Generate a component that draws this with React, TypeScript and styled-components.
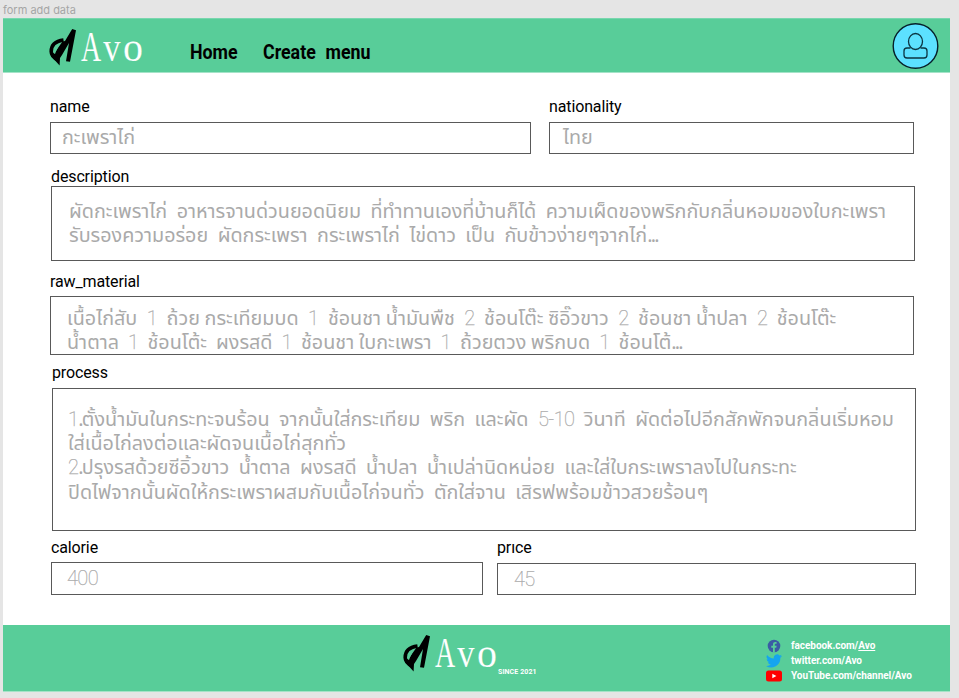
import React from "react";
import styled, { createGlobalStyle } from "styled-components";

const Global = createGlobalStyle`
  *, *::before, *::after { box-sizing: border-box; }
  body { margin: 0; background: #e5e5e5; font-family: Roboto, sans-serif; overflow: hidden; }
`;

const Page = styled.div`
  width: 959px;
  height: 698px;
  padding-left: 3px;
  background: #e5e5e5;
`;

const FrameTitle = styled.div`
  height: 18px;
  padding-top: 3px;
  font: 400 11px/14px Inter, sans-serif;
  color: #a5a5a5;
`;

const Frame = styled.div`
  display: flex;
  flex-direction: column;
  width: 947px;
  height: 674px;
  background: #fff;
`;

const Header = styled.header`
  display: flex;
  align-items: flex-start;
  height: 55px;
  padding-left: 46px;
  background: #58cd99;
  border-top: 1px solid #79d6ae;
  border-bottom: 1px solid #a5e3c8;
`;

const Brand = styled.div<{ $mt?: number }>`
  display: flex;
  align-items: flex-start;
  margin-top: ${(p) => p.$mt ?? 0}px;
`;

const BrandMark = styled.svg`
  width: 28px;
  height: 40px;
  flex: none;
`;

const BrandName = styled.svg`
  width: 63px;
  height: 44px;
  margin-left: 4px;
  flex: none;
  overflow: visible;
`;

const Nav = styled.nav`
  display: flex;
  width: 747px;
  padding: 20px 0 0 46px;
`;

const NavLink = styled.a<{ $w: number }>`
  width: ${(p) => p.$w}px;
  font: 700 20px/26px Roboto, sans-serif;
  word-spacing: 6px;
  color: #000;
  white-space: nowrap;
  transform: scaleX(0.89);
  transform-origin: left;
`;

const Avatar = styled.svg`
  width: 48px;
  height: 48px;
  margin-top: 3px;
  flex: none;
`;

const Form = styled.main`
  flex: 1;
  padding: 25px 0 0 47px;
`;

const Row = styled.div<{ $gap: number }>`
  display: flex;
  gap: ${(p) => p.$gap}px;
`;

const Field = styled.div<{ $w: number; $ml?: number; $mt?: number }>`
  width: ${(p) => p.$w}px;
  margin-left: ${(p) => p.$ml ?? 0}px;
  margin-top: ${(p) => p.$mt ?? 0}px;
`;

const Label = styled.label<{ $h: number; $clip?: number }>`
  display: block;
  height: ${(p) => p.$h}px;
  font-size: 16px;
  line-height: 18px;
  letter-spacing: -0.13px;
  color: #000;
  clip-path: ${(p) => (p.$clip ? `inset(${p.$clip}px 0 0 0)` : "none")};
`;

const Box = styled.div<{ $h: number; $pt: number; $pl: number }>`
  height: ${(p) => p.$h}px;
  padding: ${(p) => p.$pt}px 0 0 ${(p) => p.$pl}px;
  border: 1px solid #595959;
  color: #aaa;
`;

const LineBox = styled.div<{ $ws?: number }>`
  height: 24.4px;
  width: max-content;
  font: 400 19.75px/24.4px "Noto Sans Thai", Roboto, sans-serif;
  word-spacing: ${(p) => p.$ws ?? -0.4}px;
  white-space: pre;
`;

const Digits = styled.span`
  font-family: Roboto, sans-serif;
  font-size: 20px;
  font-weight: 100;
  line-height: 1;
  letter-spacing: -0.6px;
  -webkit-text-stroke: 0.25px #aaa;
`;

const Dots = styled.span`
  line-height: 1;
  letter-spacing: -1.8px;
`;

const Line = ({ children, ws }: { children: string; ws?: number }) => (
  <LineBox $ws={ws}>
    {children.split(/([0-9-]+|\.+)/).map((part, i) => {
      if (i % 2 === 0) return part;
      return part[0] === "." ? <Dots key={i}>{part}</Dots> : <Digits key={i}>{part}</Digits>;
    })}
  </LineBox>
);

const Footer = styled.footer`
  display: flex;
  height: 67px;
  padding-left: 400px;
  background: #58cd99;
  border-bottom: 1px solid #a5e3c8;
`;

const FooterBrand = styled.div`
  display: flex;
  width: 363px;
  padding-top: 8px;
`;

const Since = styled.span`
  margin-top: 35px;
  font: 700 7px/8px Roboto, sans-serif;
  letter-spacing: 0.1px;
  color: #fff;
`;

const Socials = styled.ul`
  margin: 0;
  padding: 13px 0 0;
  list-style: none;
`;

const Social = styled.li`
  display: flex;
  align-items: center;
  height: 15.2px;
  font: 700 10px/15px Roboto, sans-serif;
  letter-spacing: -0.05px;
  color: #fff;
  white-space: nowrap;
  svg { width: 16px; height: 14px; margin-right: 9px; flex: none; }
`;

const Logo = ({ top }: { top?: number }) => (
  <Brand $mt={top}>
    <BrandMark viewBox="0 0 28 40">
      <path
        d="M14.5 13 C7 14 2.2 18 2.2 24.5 C2.2 28 5 31 9 33"
        fill="none"
        stroke="#000"
        strokeWidth="3.6"
      />
      <path d="M23.2 2 L27 3.3 L21 34.8 L17 34.3 L20 16 L13 28 L11 31 L10.600 38.5 L2 29 L1 24 L6 27 L7.5 23 L13.5 14.5 L16 14 Z" fill="#000" />
      <path d="M5 26.5 Q3.8 18.500 11 16.600 L7.400 23.5 Z" fill="#58cd99" />
    </BrandMark>
    <BrandName viewBox="0 0 63 44">
      <g fill="#fff" stroke="#58cd99" strokeWidth="0.15" fontFamily="'Liberation Serif', serif" fontSize="43">
        <text transform="translate(0 34) scale(0.65 1)">A</text>
        <text transform="translate(22.200 34) scale(0.8 1)">v</text>
        <text transform="translate(42 34) scale(0.93 1)">o</text>
      </g>
    </BrandName>
  </Brand>
);

export default function App() {
  return (
    <Page>
      <Global />
      <FrameTitle>form add data</FrameTitle>
      <Frame>
        <Header>
          <Logo top={8} />
          <Nav>
            <NavLink $w={73}>Home</NavLink>
            <NavLink $w={130}>Create menu</NavLink>
          </Nav>
          <Avatar viewBox="0 0 48 48">
            <circle cx="24.5" cy="24" r="22.3" fill="#5ce1ff" stroke="#06202a" strokeWidth="1.4" />
            <g fill="none" stroke="#0b3542" strokeWidth="1.3">
              <path d="M19.5 26 H16 Q13 26 13 29 V33 Q13 36 16 36 H33 Q36 36 36 33 V29 Q36 26 33 26 H29.5" />
              <ellipse cx="24.5" cy="19.5" rx="7" ry="8" />
            </g>
          </Avatar>
        </Header>
        <Form>
          <Row $gap={18}>
            <Field $w={481}>
              <Label $h={24}>name</Label>
              <Box $h={32} $pt={3} $pl={11}>
                <Line>กะเพราไก่</Line>
              </Box>
            </Field>
            <Field $w={365.4}>
              <Label $h={24}>nationality</Label>
              <Box $h={32} $pt={3} $pl={13}>
                <Line>ไทย</Line>
              </Box>
            </Field>
          </Row>
          <Field $w={864} $ml={1} $mt={14}>
            <Label $h={18}>description</Label>
            <Box $h={75} $pt={13} $pl={17}>
              <Line>ผัดกะเพราไก่  อาหารจานด่วนยอดนิยม  ที่ทำทานเองที่บ้านก็ได้  ความเผ็ดของพริกกับกลิ่นหอมของใบกะเพรา</Line>
              <Line>รับรองความอร่อย  ผัดกระเพรา  กระเพราไก่  ไข่ดาว  เป็น  กับข้าวง่ายๆจากไก่...</Line>
            </Box>
          </Field>
          <Field $w={864} $mt={12}>
            <Label $h={23}>raw_material</Label>
            <Box $h={59} $pt={9.5} $pl={16}>
              <Line>เนื้อไก่สับ  1  ถ้วย กระเทียมบด  1  ช้อนชา น้ำมันพืช  2  ช้อนโต๊ะ ซิอิ๊วขาว  2  ช้อนชา น้ำปลา  2  ช้อนโต๊ะ</Line>
              <Line ws={-0.6}>น้ำตาล  1  ช้อนโต้ะ  ผงรสดี  1  ช้อนชา ใบกะเพรา  1  ถ้วยตวง พริกบด  1  ช้อนโต้...</Line>
            </Box>
          </Field>
          <Field $w={864} $ml={2} $mt={9}>
            <Label $h={24}>process</Label>
            <Box $h={143} $pt={18.6} $pl={15}>
              <Line>1.ตั้งน้ำมันในกระทะจนร้อน  จากนั้นใส่กระเทียม  พริก  และผัด  5-10  วินาที  ผัดต่อไปอีกสักพักจนกลิ่นเริ่มหอม</Line>
              <Line>ใส่เนื้อไก่ลงต่อและผัดจนเนื้อไก่สุกทั่ว</Line>
              <Line>2.ปรุงรสด้วยซีอิ้วขาว  น้ำตาล  ผงรสดี  น้ำปลา  น้ำเปล่านิดหน่อย  และใส่ใบกระเพราลงไปในกระทะ</Line>
              <Line>ปิดไฟจากนั้นผัดให้กระเพราผสมกับเนื้อไก่จนทั่ว  ตักใส่จาน  เสิรฟพร้อมข้าวสวยร้อนๆ</Line>
            </Box>
          </Field>
          <Row $gap={14}>
            <Field $w={432} $ml={1} $mt={8}>
              <Label $h={23}>calorie</Label>
              <Box $h={33} $pt={4} $pl={15}>
                <Line>400</Line>
              </Box>
            </Field>
            <Field $w={419} $mt={8}>
              <Label $h={24} $clip={5}>price</Label>
              <Box $h={32} $pt={4} $pl={16}>
                <Line>45</Line>
              </Box>
            </Field>
          </Row>
        </Form>
        <Footer>
          <FooterBrand>
            <Logo />
            <Since>SINCE 2021</Since>
          </FooterBrand>
          <Socials>
            <Social>
              <svg viewBox="0 0 16 14">
                <circle cx="8" cy="7" r="6.3" fill="#3b5ba5" />
                <path d="M7 13.4V8.7H5.3V6.8H7V5.4C7 3.7 8 3 9.3 3l1.3.1v1.6H9.8c-.8 0-1 .4-1 1v1.1h1.8l-.3 1.9H8.8v4.7z" fill="#58cd99" />
              </svg>
              <span>facebook.com/<u>Avo</u></span>
            </Social>
            <Social>
              <svg viewBox="0 0 24 20">
                <path
                  d="M24 2.4a10 10 0 0 1-2.8.8A5 5 0 0 0 23.3.5a10 10 0 0 1-3.1 1.2 4.9 4.9 0 0 0-8.4 4.5A14 14 0 0 1 1.7 1a4.9 4.9 0 0 0 1.5 6.6 5 5 0 0 1-2.2-.6v.06a4.9 4.9 0 0 0 3.9 4.8 5 5 0 0 1-2.2.1 4.9 4.9 0 0 0 4.6 3.4A10 10 0 0 1 0 17.4a14 14 0 0 0 21.5-12.4A10 10 0 0 0 24 2.4z"
                  fill="#14a5ef"
                />
              </svg>
              <span>twitter.com/Avo</span>
            </Social>
            <Social>
              <svg viewBox="0 0 16 14">
                <rect y="1.5" width="16" height="11" rx="2.5" fill="#f00" />
                <path d="M6.3 4.8v4.4L10.4 7z" fill="#fff" />
              </svg>
              <span>YouTube.com/channel/Avo</span>
            </Social>
          </Socials>
        </Footer>
      </Frame>
    </Page>
  );
}
